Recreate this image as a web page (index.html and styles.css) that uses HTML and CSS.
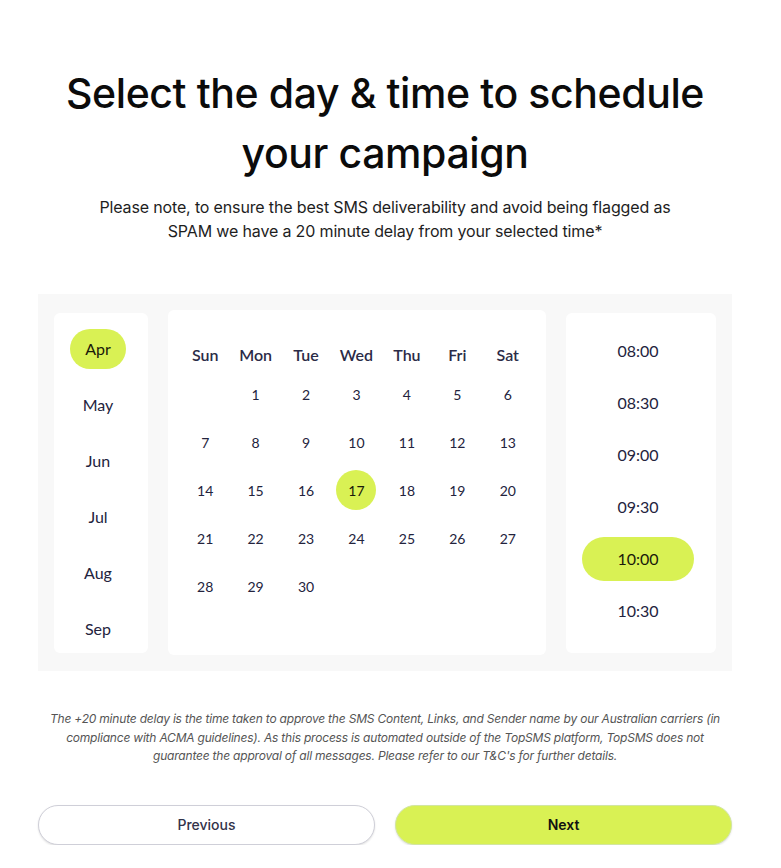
FILE: index.html
```html
<!DOCTYPE html>
<html lang="en">
<head>
<meta charset="utf-8">
<title>Schedule campaign</title>
<link rel="stylesheet" href="styles.css">
</head>
<body>
<div class="page">
  <h1 class="title">Select the day &amp; time to schedule your campaign</h1>
  <p class="subtitle">Please note, to ensure the best SMS deliverability and avoid being flagged as SPAM we have a 20 minute delay from your selected time*</p>

  <div class="picker">
    <div class="card months">
      <div class="month active">Apr</div>
      <div class="month">May</div>
      <div class="month">Jun</div>
      <div class="month">Jul</div>
      <div class="month">Aug</div>
      <div class="month">Sep</div>
    </div>

    <div class="card calendar">
      <div class="dow">Sun</div><div class="dow">Mon</div><div class="dow">Tue</div><div class="dow">Wed</div><div class="dow">Thu</div><div class="dow">Fri</div><div class="dow">Sat</div>
      <div class="day"></div><div class="day"><span>1</span></div><div class="day"><span>2</span></div><div class="day"><span>3</span></div><div class="day"><span>4</span></div><div class="day"><span>5</span></div><div class="day"><span>6</span></div>
      <div class="day"><span>7</span></div><div class="day"><span>8</span></div><div class="day"><span>9</span></div><div class="day"><span>10</span></div><div class="day"><span>11</span></div><div class="day"><span>12</span></div><div class="day"><span>13</span></div>
      <div class="day"><span>14</span></div><div class="day"><span>15</span></div><div class="day"><span>16</span></div><div class="day"><span class="selected">17</span></div><div class="day"><span>18</span></div><div class="day"><span>19</span></div><div class="day"><span>20</span></div>
      <div class="day"><span>21</span></div><div class="day"><span>22</span></div><div class="day"><span>23</span></div><div class="day"><span>24</span></div><div class="day"><span>25</span></div><div class="day"><span>26</span></div><div class="day"><span>27</span></div>
      <div class="day"><span>28</span></div><div class="day"><span>29</span></div><div class="day"><span>30</span></div>
    </div>

    <div class="card times">
      <div class="time">08:00</div>
      <div class="time">08:30</div>
      <div class="time">09:00</div>
      <div class="time">09:30</div>
      <div class="time active">10:00</div>
      <div class="time">10:30</div>
    </div>
  </div>

  <p class="note">The +20 minute delay is the time taken to approve the SMS Content, Links, and Sender name by our Australian carriers (in compliance with ACMA guidelines). As this process is automated outside of the TopSMS platform, TopSMS does not guarantee the approval of all messages. Please refer to our T&amp;C's for further details.</p>

  <div class="actions">
    <button class="btn btn-prev">Previous</button>
    <button class="btn btn-next">Next</button>
  </div>
</div>
</body>
</html>
```

FILE: styles.css
```css
* { box-sizing: border-box; }

body {
  margin: 0;
  background: #ffffff;
  font-family: Inter, "Liberation Sans", sans-serif;
  color: #111;
}

.page {
  width: 694px;
  margin-left: 38px;
  padding-top: 63px;
}

.title {
  margin: 0;
  font-size: 41px;
  line-height: 60px;
  font-weight: 500;
  letter-spacing: -0.4px;
  text-align: center;
  color: #0b0b0b;
  padding: 0 10px;
}

.subtitle {
  margin: 12px 0 0;
  font-size: 16px;
  line-height: 24px;
  text-align: center;
  color: #1e1e1e;
  letter-spacing: -0.15px;
  padding: 0 50px;
}

.picker {
  margin-top: 51px;
  background: #f8f8f8;
  padding: 16px;
  display: flex;
  align-items: center;
  gap: 20px;
  font-family: Lato, "Open Sans", sans-serif;
  color: #23233d;
}

.card {
  background: #ffffff;
  border-radius: 6px;
}

.months {
  width: 94px;
  height: 340px;
  padding: 16px 6px 0 0;
  display: flex;
  flex-direction: column;
  align-items: center;
  gap: 16px;
}

.month {
  height: 40px;
  padding: 0 15px;
  border-radius: 20px;
  display: flex;
  align-items: center;
  font-size: 16px;
}

.month.active,
.time.active,
.day .selected {
  background: #d9f154;
  color: #1a1a0a;
}

.calendar {
  width: 378px;
  height: 345px;
  padding: 28px 13px 0 12px;
  display: grid;
  grid-template-columns: repeat(7, 1fr);
  grid-auto-rows: 48px;
  grid-template-rows: 32px;
  align-content: start;
}

.dow {
  display: flex;
  align-items: center;
  justify-content: center;
  font-size: 16px;
  font-weight: 600;
  color: #2b2b47;
}

.day {
  display: flex;
  align-items: center;
  justify-content: center;
  font-size: 14px;
}

.day span {
  width: 40px;
  height: 40px;
  border-radius: 50%;
  display: flex;
  align-items: center;
  justify-content: center;
}

.times {
  width: 150px;
  height: 340px;
  padding: 16px 22px 0 16px;
  display: flex;
  flex-direction: column;
  gap: 8px;
}

.time {
  height: 44px;
  border-radius: 22px;
  display: flex;
  align-items: center;
  justify-content: center;
  font-size: 16px;
}

.note {
  margin: 39px 0 0;
  padding: 0 8px;
  font-size: 12px;
  line-height: 18.5px;
  font-style: italic;
  text-align: center;
  color: #555555;
  letter-spacing: -0.2px;
}

.actions {
  margin-top: 39px;
  display: flex;
  gap: 20px;
}

.btn {
  flex: 1;
  height: 40px;
  border-radius: 20px;
  font-family: Inter, "Liberation Sans", sans-serif;
  font-size: 14px;
  cursor: pointer;
  box-shadow: 0 1px 2px rgba(0, 0, 0, 0.12);
}

.btn-prev {
  background: #ffffff;
  border: 1px solid #cfcfd8;
  color: #33334a;
  font-weight: 500;
}

.btn-next {
  background: #d9f154;
  border: 1px solid #d2e6a0;
  color: #111111;
  font-weight: 600;
}
```
